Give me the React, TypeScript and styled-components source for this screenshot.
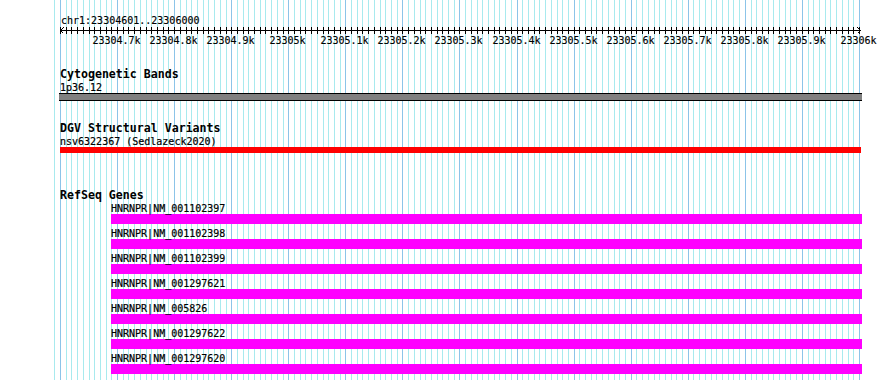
import styled, { createGlobalStyle } from "styled-components";

const START = 23304600;
const LEFT = 60.5;
const PX_PER_BP = 0.5707;
const toX = (bp: number) => LEFT + (bp - START) * PX_PER_BP;

const genes = [
  "HNRNPR|NM_001102397",
  "HNRNPR|NM_001102398",
  "HNRNPR|NM_001102399",
  "HNRNPR|NM_001297621",
  "HNRNPR|NM_005826",
  "HNRNPR|NM_001297622",
  "HNRNPR|NM_001297620",
];

const minorLines: number[] = [];
for (let i = -1; i <= 140; i++) minorLines.push(Math.floor(toX(START + i * 10)) + 0.5);
const majorLines: number[] = [];
for (let k = 0; k <= 14; k++) majorLines.push(Math.floor(toX(START + k * 100)) + 0.5);

const labelFor = (k: number) => {
  const v = (START + k * 100) / 1000;
  return Number.isInteger(v) ? `${v}k` : `${v.toFixed(1)}k`;
};

const App = () => {
  return (
    <>
      <GlobalStyle />
      <Canvas>
        <GridLayer width={890} height={380}>
          {minorLines.map((x, i) => (
            <line key={"m" + i} x1={x} x2={x} y1={0} y2={380} stroke="#a8eaee" />
          ))}
          {majorLines.map((x, i) => (
            <line key={"M" + i} x1={x} x2={x} y1={0} y2={380} stroke="#8cc4e8" />
          ))}
        </GridLayer>
        <Content>
          <RulerLabel>chr1:23304601..23306000</RulerLabel>
          <RulerScale width={890} height={22}>
            <line x1={60} x2={861} y1={3.5} y2={3.5} stroke="#000" />
            <polyline points="63.5,0.5 60.5,3.5 63.5,6.5" fill="none" stroke="#000" />
            <polyline points="857.5,0.5 860.5,3.5 857.5,6.5" fill="none" stroke="#000" />
            {minorLines.slice(1).map((x, i) => (
              <line key={"t" + i} x1={x} x2={x} y1={0} y2={7} stroke="#000" />
            ))}
            {majorLines.slice(1).map((x, k) => (
              <text key={"l" + k} x={x - 1} y={17} textAnchor="middle">
                {labelFor(k + 1)}
              </text>
            ))}
          </RulerScale>

          <Track $top={19}>
            <TrackTitle>Cytogenetic Bands</TrackTitle>
            <FeatureLabel $left={60}>1p36.12</FeatureLabel>
            <Bar $left={59} $width={803} $height={8} $color="#808080" $outline />
          </Track>

          <Track $top={21}>
            <TrackTitle>DGV Structural Variants</TrackTitle>
            <FeatureLabel $left={60}>nsv6322367 (Sedlazeck2020)</FeatureLabel>
            <Bar $left={60} $width={801} $height={6} $color="#ff0000" />
          </Track>

          <Track $top={36}>
            <TrackTitle>RefSeq Genes</TrackTitle>
            {genes.map((g) => (
              <GeneRow key={g}>
                <FeatureLabel $left={111}>{g}</FeatureLabel>
                <Bar $left={111} $width={751} $height={10} $color="#ff00ff" />
              </GeneRow>
            ))}
          </Track>
        </Content>
      </Canvas>
    </>
  );
};

export default App;

const GlobalStyle = createGlobalStyle`
  body {
    margin: 0;
    background: #ffffff;
  }
`;

const Canvas = styled.div`
  position: relative;
  width: 890px;
  height: 380px;
  overflow: hidden;
  background: #ffffff;
  font-family: "DejaVu Sans Mono", "Liberation Mono", monospace;
  color: #000000;
`;

const GridLayer = styled.svg`
  position: absolute;
  left: 0;
  top: 0;
  shape-rendering: crispEdges;
`;

const Content = styled.div`
  position: relative;
  padding-top: 15px;
`;

const RulerLabel = styled.div`
  margin-left: 61px;
  height: 12px;
  font-size: 10px;
  line-height: 12px;
  white-space: nowrap;
  -webkit-text-stroke: 0.15px #000;
`;

const RulerScale = styled.svg`
  display: block;
  shape-rendering: crispEdges;
  text {
    font-family: "DejaVu Sans Mono", "Liberation Mono", monospace;
    font-size: 10px;
    fill: #000000;
    stroke: #000000;
    stroke-width: 0.15px;
  }
`;

const Track = styled.section<{ $top: number }>`
  margin-top: ${(p) => p.$top}px;
`;

const TrackTitle = styled.div`
  margin-left: 60px;
  height: 13px;
  font-size: 11.6px;
  font-weight: bold;
  line-height: 13px;
  white-space: nowrap;
`;

const FeatureLabel = styled.div<{ $left: number }>`
  margin-left: ${(p) => p.$left}px;
  height: 12px;
  font-size: 10px;
  line-height: 11px;
  padding-top: 1px;
  box-sizing: border-box;
  white-space: nowrap;
  -webkit-text-stroke: 0.2px #000;
`;

const GeneRow = styled.div`
  margin-bottom: 3px;
`;

const Bar = styled.div<{
  $left: number;
  $width: number;
  $height: number;
  $color: string;
  $outline?: boolean;
}>`
  margin-left: ${(p) => p.$left}px;
  width: ${(p) => p.$width}px;
  height: ${(p) => p.$height}px;
  box-sizing: border-box;
  background: ${(p) => p.$color};
  border-top: ${(p) => (p.$outline ? "1px solid #000" : "none")};
  border-bottom: ${(p) => (p.$outline ? "1px solid #000" : "none")};
`;
